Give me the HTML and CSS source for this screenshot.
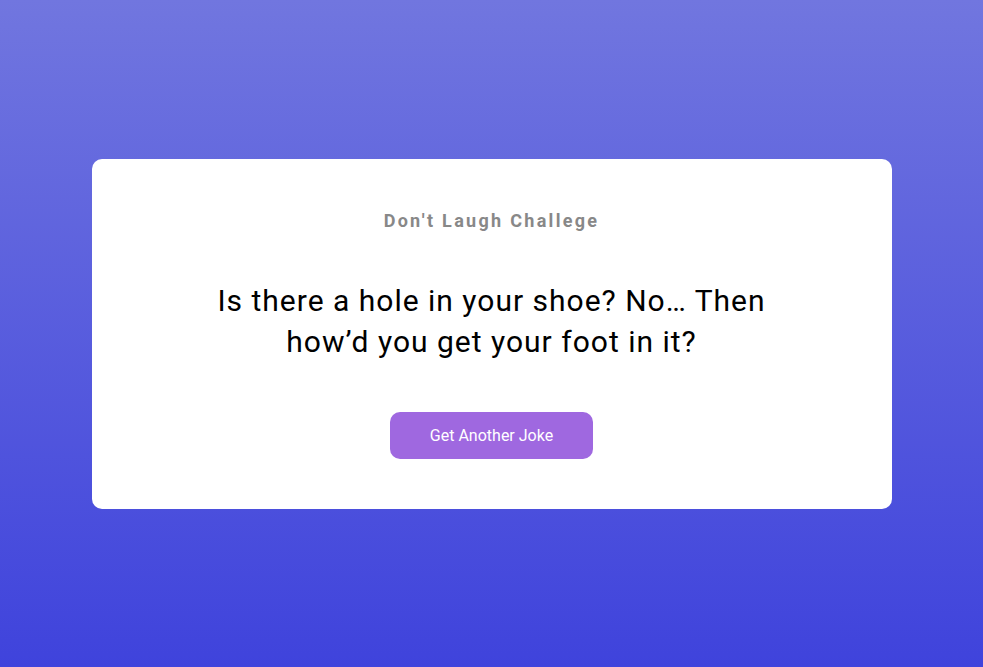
FILE: index.html
```html
<!DOCTYPE html>
<html>
<head>
<meta charset="utf-8">
<link rel="stylesheet" href="styles.css">
</head>
<body>
<main class="page">
  <section class="card">
    <h3 class="title">Don't Laugh Challege</h3>
    <div class="joke">Is there a hole in your shoe? No… Then how’d you get your foot in it?</div>
    <button class="btn">Get Another Joke</button>
  </section>
</main>
</body>
</html>
```
FILE: styles.css
```css
* { box-sizing: border-box; }
html, body { margin: 0; padding: 0; height: 100%; }
body {
  font-family: Roboto, "Liberation Sans", sans-serif;
  background: linear-gradient(to bottom, #7176df, #3f43dc);
}
.page {
  height: 100vh;
  display: flex;
  align-items: center;
  justify-content: center;
}
.card {
  width: 800px;
  background: #fff;
  border-radius: 10px;
  padding: 51px 100px 50px;
  display: flex;
  flex-direction: column;
  align-items: center;
  text-align: center;
}
.title {
  margin: 0;
  font-size: 18px;
  line-height: 21px;
  font-weight: 700;
  letter-spacing: 2.3px;
  color: #888;
}
.joke {
  margin: 49px 0 50px;
  font-size: 30px;
  line-height: 41px;
  letter-spacing: 1px;
  color: #000;
}
.btn {
  font-family: inherit;
  width: 203px;
  height: 47px;
  border: none;
  border-radius: 10px;
  background: #9f68e0;
  color: #fff;
  font-size: 16px;
}
```
